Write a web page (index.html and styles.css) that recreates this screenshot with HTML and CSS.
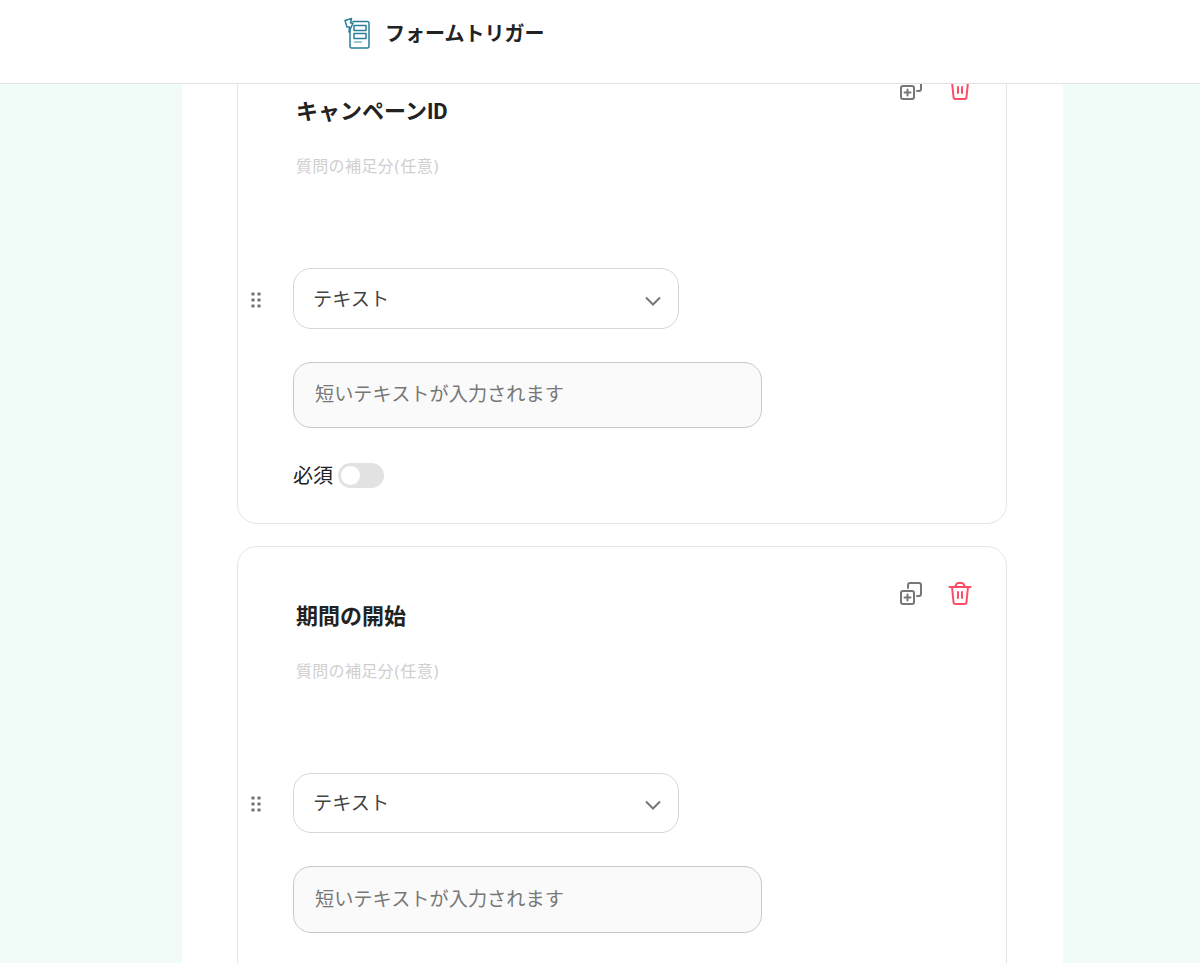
FILE: index.html
```html
<!DOCTYPE html>
<html lang="ja">
<head>
    <meta charset="UTF-8">
    <meta name="viewport" content="width=device-width, initial-scale=1.0">
    <title>フォームトリガー</title>
    <link rel="stylesheet" href="styles.css">
</head>
<body>

<header class="top-bar">
    <svg class="top-logo" width="28" height="32" viewBox="0 0 28 32" fill="none" stroke="#2a7f96" stroke-width="1.500" stroke-linejoin="round">
        <path d="M8.500 4.500h15a1.500 1.500 0 0 1 1.500 1.500v23.500a1.500 1.500 0 0 1-1.500 1.500h-16a1.500 1.500 0 0 1-1.500-1.500V13"/>
        <path d="M1 3.500l6.500-2-1 4.500h2.500l-4 9 .5-5h-2.500z" fill="#fff"/>
        <rect x="10" y="8.500" width="12" height="5"/>
        <rect x="10" y="16.500" width="12" height="5"/>
        <path d="M10 25h8" stroke="#7fb4c2"/>
    </svg>
    <h1 class="top-title">フォームトリガー</h1>
</header>

<main class="content">
    <div class="card-list">

        <section class="card">
            <div class="card-head">
                <div class="card-text">
                    <h2 class="card-title">キャンペーンID</h2>
                    <p class="card-note">質問の補足分(任意)</p>
                </div>
                <div class="card-actions">
                    <svg width="24" height="24" viewBox="0 0 24 24" fill="none" stroke="#777" stroke-width="2" stroke-linecap="round" stroke-linejoin="round">
                        <rect x="2" y="10" width="13" height="13" rx="2"/>
                        <path d="M9 7V4a2 2 0 0 1 2-2h9a2 2 0 0 1 2 2v9a2 2 0 0 1-2 2h-2"/>
                        <path d="M8.500 13.500v6M5.500 16.500h6"/>
                    </svg>
                    <svg width="24" height="24" viewBox="0 0 24 24" fill="none" stroke="#ff4d67" stroke-width="2" stroke-linecap="round" stroke-linejoin="round">
                        <path d="M1.500 6h21"/>
                        <path d="M7 6l1.500-3a2 2 0 0 1 1.500-1h4a2 2 0 0 1 1.500 1l1.500 3"/>
                        <path d="M4 6l1.500 15a2 2 0 0 0 2 2h9a2 2 0 0 0 2-2l1.500-15"/>
                        <path d="M10 11v6M14 11v6"/>
                    </svg>
                </div>
            </div>
            <div class="type-row">
                <svg class="drag-handle" width="10" height="16" viewBox="0 0 10 16" fill="#777">
                    <circle cx="2" cy="2" r="1.800"/><circle cx="8" cy="2" r="1.800"/>
                    <circle cx="2" cy="8" r="1.800"/><circle cx="8" cy="8" r="1.800"/>
                    <circle cx="2" cy="14" r="1.800"/><circle cx="8" cy="14" r="1.800"/>
                </svg>
                <div class="type-select">
                    <span>テキスト</span>
                    <svg width="16" height="10" viewBox="0 0 16 10" fill="none" stroke="#777" stroke-width="2"><path d="M1 1.500l7 7 7-7"/></svg>
                </div>
            </div>
            <div class="answer-box">短いテキストが入力されます</div>
            <div class="required-row">
                <span>必須</span>
                <span class="switch"></span>
            </div>
        </section>

        <section class="card">
            <div class="card-head">
                <div class="card-text">
                    <h2 class="card-title">期間の開始</h2>
                    <p class="card-note">質問の補足分(任意)</p>
                </div>
                <div class="card-actions">
                    <svg width="24" height="24" viewBox="0 0 24 24" fill="none" stroke="#777" stroke-width="2" stroke-linecap="round" stroke-linejoin="round">
                        <rect x="2" y="10" width="13" height="13" rx="2"/>
                        <path d="M9 7V4a2 2 0 0 1 2-2h9a2 2 0 0 1 2 2v9a2 2 0 0 1-2 2h-2"/>
                        <path d="M8.500 13.500v6M5.500 16.500h6"/>
                    </svg>
                    <svg width="24" height="24" viewBox="0 0 24 24" fill="none" stroke="#ff4d67" stroke-width="2" stroke-linecap="round" stroke-linejoin="round">
                        <path d="M1.500 6h21"/>
                        <path d="M7 6l1.500-3a2 2 0 0 1 1.500-1h4a2 2 0 0 1 1.500 1l1.500 3"/>
                        <path d="M4 6l1.500 15a2 2 0 0 0 2 2h9a2 2 0 0 0 2-2l1.500-15"/>
                        <path d="M10 11v6M14 11v6"/>
                    </svg>
                </div>
            </div>
            <div class="type-row">
                <svg class="drag-handle" width="10" height="16" viewBox="0 0 10 16" fill="#777">
                    <circle cx="2" cy="2" r="1.800"/><circle cx="8" cy="2" r="1.800"/>
                    <circle cx="2" cy="8" r="1.800"/><circle cx="8" cy="8" r="1.800"/>
                    <circle cx="2" cy="14" r="1.800"/><circle cx="8" cy="14" r="1.800"/>
                </svg>
                <div class="type-select">
                    <span>テキスト</span>
                    <svg width="16" height="10" viewBox="0 0 16 10" fill="none" stroke="#777" stroke-width="2"><path d="M1 1.500l7 7 7-7"/></svg>
                </div>
            </div>
            <div class="answer-box">短いテキストが入力されます</div>
        </section>

    </div>
</main>

</body>
</html>
```

FILE: styles.css
```css
/* page */
body {
    margin: 0;
    height: 963px;
    overflow: hidden;
    background-color: #f1fbf8;
    color: #222;
    font-family: "Noto Sans CJK JP", "Noto Sans", sans-serif;
}
/* top bar */
.top-bar {
    display: flex;
    align-items: center;
    gap: 14px;
    height: 84px;
    padding: 0 0 18px 344px;
    box-sizing: border-box;
    background-color: #fff;
    border-bottom: 1px solid #e2e2e2;
}
.top-logo {
    flex-shrink: 0;
}
.top-title {
    margin: 0 0 0 -1px;
    font-size: 20px;
    font-weight: 700;
    line-height: 30px;
}
/* white column, the list is scrolled so the first card is cut off */
.content {
    width: 881px;
    height: 879px;
    margin-left: 182px;
    overflow: hidden;
    background-color: #fff;
}
.card-list {
    display: flex;
    flex-direction: column;
    gap: 22.2px;
    width: 770px;
    margin: -42.6px 0 0 55px;
}
/* card */
.card {
    box-sizing: border-box;
    height: 482.6px;
    border: 1px solid #e5e5e5;
    border-radius: 20px;
}
.card-head {
    display: flex;
    justify-content: space-between;
    height: 226px;
}
.card-text {
    padding: 54px 0 0 58px;
}
.card-title {
    margin: 0;
    font-family: Roboto, "Noto Sans CJK JP", sans-serif;
    font-size: 22px;
    font-weight: 700;
    line-height: 32px;
}
.card-note {
    margin: 27px 0 0;
    font-family: "DejaVu Sans", "Noto Sans CJK JP", sans-serif;
    font-size: 16px;
    letter-spacing: 0.3px;
    line-height: 24px;
    color: #cfcfcf;
}
.card-actions {
    display: flex;
    gap: 25px;
    padding: 34px 34px 0 0;
}
/* type select */
.type-row {
    display: flex;
    align-items: center;
    gap: 32px;
    padding-left: 13px;
}
.drag-handle {
    flex-shrink: 0;
    margin-top: 2px;
}
.type-select {
    display: flex;
    align-items: center;
    justify-content: space-between;
    box-sizing: border-box;
    width: 386px;
    height: 60.2px;
    padding: 0 17px 0 19px;
    border: 1px solid #d3d7de;
    border-radius: 18px;
    font-size: 19.2px;
    line-height: 28px;
    color: #444;
}
.type-select span {
    margin-top: -2px;
}
.type-select svg {
    margin-top: 4px;
}
/* answer preview */
.answer-box {
    display: flex;
    align-items: center;
    box-sizing: border-box;
    width: 469px;
    height: 66.7px;
    margin: 33px 0 0 55px;
    padding: 0 21px 3px;
    background-color: #fafafa;
    border: 1px solid #c8c8c8;
    border-radius: 18px;
    font-size: 19.2px;
    line-height: 28px;
    color: #777;
}
/* required switch */
.required-row {
    display: flex;
    align-items: center;
    gap: 5px;
    margin: 35px 0 0 55px;
    font-size: 20px;
    line-height: 25px;
}
.required-row span:first-child {
    margin-top: -2px;
}
.switch {
    position: relative;
    width: 46px;
    height: 25px;
    background-color: #e2e2e2;
    border-radius: 13px;
}
.switch::after {
    content: "";
    position: absolute;
    top: 3px;
    left: 3px;
    width: 19px;
    height: 19px;
    background-color: #fff;
    border-radius: 50%;
}
```
